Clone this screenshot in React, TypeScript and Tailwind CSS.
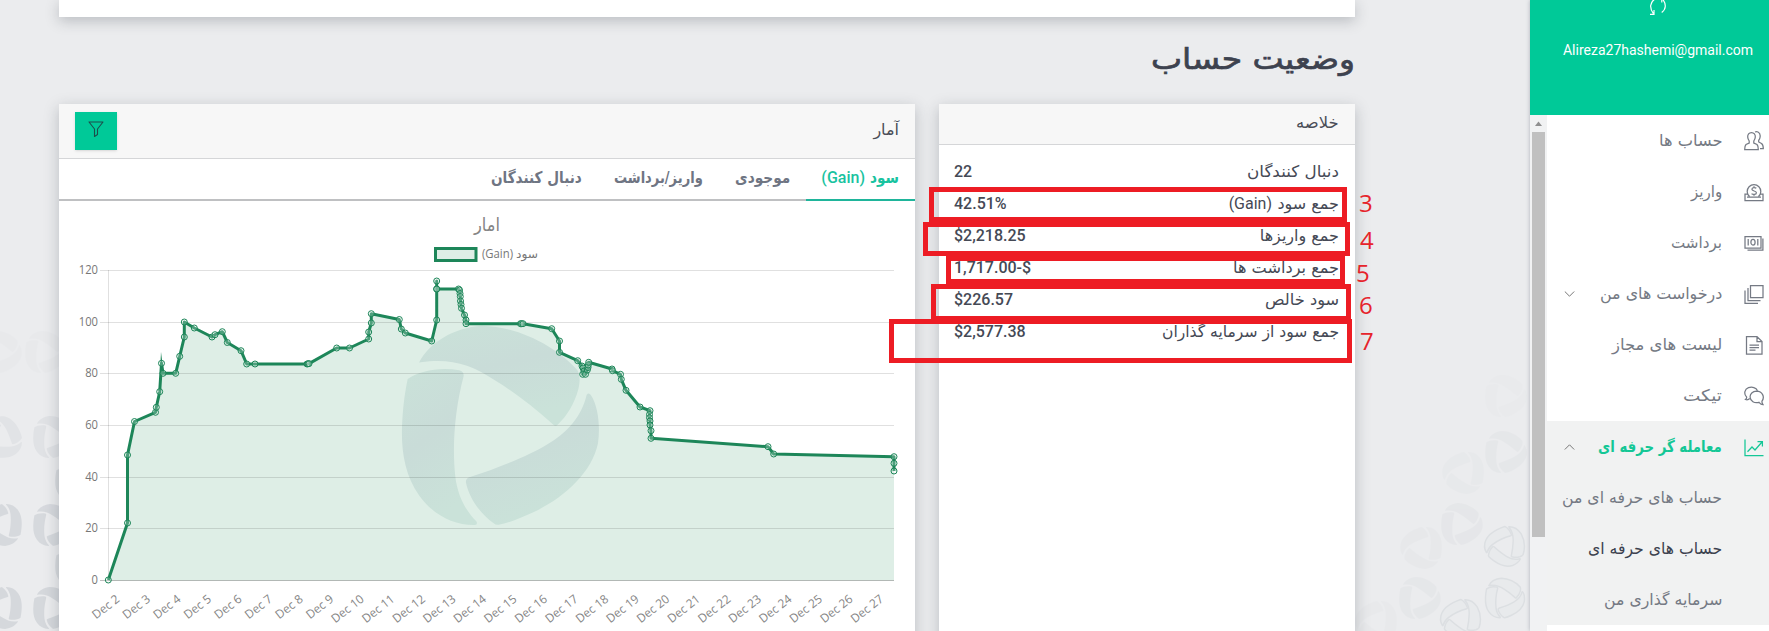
import { useLayoutEffect, useRef, useState, type ReactNode } from "react";

type FitProps = { w: number; children: ReactNode; className?: string };

/** Right-to-left label condensed or widened to a given width. */
function Fit({ w, children, className = "" }: FitProps) {
  const ref = useRef<HTMLSpanElement>(null);
  const [scale, setScale] = useState(1);
  useLayoutEffect(() => {
    if (ref.current) setScale(w / ref.current.offsetWidth);
  }, [w]);
  return (
    <span className={`flex shrink-0 justify-start whitespace-nowrap ${className}`} style={{ width: w }}>
      <span ref={ref} className="inline-block shrink-0 origin-right" style={{ transform: `scaleX(${scale})` }}>
        {children}
      </span>
    </span>
  );
}

function LogoShape() {
  return (
    <>
      <path d="M88 306C118 248 190 203 275 197C390 200 500 262 562 330C570 346 571 362 565 388C554 430 530 470 503 494Q497 500 490 494C430 440 370 395 318 363C240 311 180 295 92 307Q86 309 88 306Z" />
      <path d="M53 357C90 332 150 320 208 331Q222 335 221 348C194 450 186 560 196 650C203 710 230 755 259 784Q264 793 255 795C190 796 130 765 88 707C40 640 32 560 37 480C40 430 46 390 53 357Z" />
      <path d="M590 404Q597 396 603 406C625 440 631 500 624 550C605 640 520 715 430 757C390 776 355 789 326 794Q318 796 311 790C270 760 238 715 228 668Q226 657 238 652C330 622 420 585 470 554C530 520 575 470 590 404Z" />
    </>
  );
}

const marks = [
  { x: 1, y: 437, r: -90, o: 0.3 }, { x: 54, y: 437, r: 0, o: 0.35 },
  { x: 1, y: 525, r: 180, o: 0.65 }, { x: 54, y: 525, r: 0, o: 0.65 },
  { x: 1, y: 608, r: 180, o: 0.7 }, { x: 54, y: 608, r: 0, o: 0.7 },
  { x: 76, y: 480, r: 0, o: 0.6 }, { x: 76, y: 565, r: 0, o: 0.6 },
  { x: 1, y: 352, r: 0, o: 0.08 }, { x: 46, y: 352, r: 0, o: 0.08 },
  { x: 1506, y: 396, r: 0, o: 0.05 }, { x: 1506, y: 452, r: 0, o: 0.16 },
  { x: 1463, y: 473, r: 180, o: 0.1 }, { x: 1462, y: 524, r: 0, o: 0.18 },
  { x: 1421, y: 548, r: 180, o: 0.12 }, { x: 1420, y: 598, r: 0, o: 0.16 },
  { x: 1376, y: 622, r: 180, o: 0.08 },
];
const outlined = [
  { x: 1506, y: 547, r: 60 }, { x: 1505, y: 598, r: 0 }, { x: 1462, y: 620, r: 60 },
];

function Backdrop() {
  return (
    <svg className="absolute inset-0" width="1530" height="631" viewBox="0 0 1530 631" aria-hidden="true">
      {marks.map((m, i) => (
        <g key={i} fill="#ccd0d5" opacity={m.o} transform={`translate(${m.x} ${m.y}) rotate(${m.r}) scale(.07) translate(-332 -496)`}>
          <LogoShape />
        </g>
      ))}
      {outlined.map((m, i) => (
        <g key={i} fill="#e8eaec" stroke="#dcdfe2" strokeWidth="22" transform={`translate(${m.x} ${m.y}) rotate(${m.r}) scale(.066) translate(-332 -496)`}>
          <LogoShape />
        </g>
      ))}
    </svg>
  );
}

const points: [number, number][] = [
  [108.3, 580], [127.5, 523], [127.5, 455], [134.5, 421.5], [155.5, 412.3], [156.3, 407.3], [159.7, 391.7],
  [161.5, 363.3], [163, 373.3], [175.7, 373.3], [179.7, 356.3], [184.3, 337], [184.3, 322], [194.3, 328],
  [212, 337], [215, 334.7], [222.3, 331.7], [227.3, 342.5], [241, 350.7], [246.7, 364], [255, 364],
  [307, 364], [308, 363.8], [309, 363.6], [336.7, 348], [349.5, 348], [368.7, 339], [368.7, 332], [371.3, 323],
  [371.3, 313.7], [399.3, 319.5], [401.3, 329], [405.3, 333], [431.7, 341], [436.7, 320], [436.7, 289],
  [436.7, 281], [436.7, 289], [458.5, 289], [459.5, 290], [460, 293.5], [460.3, 296.5], [460.5, 301], [461, 304.5], [461.5, 308.3],
  [464.5, 315], [466, 320], [466, 323.7], [520.5, 323.7], [521.5, 323.7], [523, 323.7], [551.7, 328.7], [559.5, 341],
  [559.5, 352.3], [577.7, 360.7], [582, 366], [583, 368], [584, 371], [582.7, 374.3], [585.5, 374.3], [587.3, 370],
  [588, 367.5], [588.3, 365], [588.7, 362.3], [612, 369], [612.5, 370.7], [620.5, 374.3], [621.3, 379.3], [626, 390.3],
  [640, 407], [650, 410.7], [649.5, 414.5], [649.5, 417.7], [650, 421], [650, 425], [651, 430.7], [651, 438.3],
  [768, 446.7], [773.7, 454], [894, 456.7], [894, 463.3], [894, 471],
];
const linePath = "M" + points.map((p) => p.join(" ")).join("L");
const days = Array.from({ length: 26 }, (_, i) => i + 2);
const ticks = [120, 100, 80, 60, 40, 20, 0];

function Chart() {
  return (
    <svg className="block" width="856" height="430" viewBox="59 201 856 430" direction="ltr">
      <defs>
        <linearGradient id="blade" x1="0" y1="0" x2=".35" y2="1">
          <stop offset="0" stopColor="#cae2d9" />
          <stop offset=".5" stopColor="#c9dcd8" />
          <stop offset="1" stopColor="#cae2d9" />
        </linearGradient>
      </defs>
      <g fill="#777" fontFamily="'DejaVu Sans', sans-serif" direction="rtl">
        <text x="500" y="231" fontSize="18" textLength="26" lengthAdjust="spacingAndGlyphs" fill="#858585">امار</text>
        <text x="538" y="258" fontSize="12" textLength="22" lengthAdjust="spacingAndGlyphs">سود</text>
      </g>
      <text x="482" y="258" fontSize="12" fontFamily="'Open Sans', sans-serif" fill="#777" textLength="31" lengthAdjust="spacingAndGlyphs">(Gain)</text>
      <rect x="435.5" y="248.5" width="40.5" height="12" fill="#deeee6" stroke="#1d8659" strokeWidth="3" />
      <path d={`${linePath}V580.5H108.3Z`} fill="#deeee6" />
      <g fill="url(#blade)" transform="translate(390 260) scale(.33333)"><LogoShape /></g>
      <g stroke="#000" strokeOpacity=".12" shapeRendering="crispEdges">
        {ticks.map((t) => (
          <line key={t} x1="100" x2="894" y1={580.5 - Math.round(t * 2.583)} y2={580.5 - Math.round(t * 2.583)} strokeOpacity={t === 0 ? 0.25 : 0.12} />
        ))}
        <line x1="108.5" x2="108.5" y1="270" y2="580" />
      </g>
      <path d={linePath} fill="none" stroke="#1d8659" strokeWidth="3" strokeLinejoin="round" />
      <path d="M160.4 364L161 352L162.5 364Z" fill="#1d8659" />
      <g fill="#deeee6" fillOpacity=".25" stroke="#1d8659" strokeWidth="1">
        {points.map(([x, y], i) => <circle key={i} cx={x} cy={y} r="3" />)}
      </g>
      <g fill="#777" fontSize="12" fontFamily="'Open Sans', sans-serif" textAnchor="end">
        {ticks.map((t) => (
          <text key={t} x="98" y={584 - t * 2.583} textLength={String(t).length * 6.4} lengthAdjust="spacingAndGlyphs">{t}</text>
        ))}
        {days.map((d, i) => (
          <text key={d} transform={`translate(${120.5 + i * 30.55} 600.5) rotate(-38)`} fill="#858585" textLength={d < 10 ? 31 : 37.5} lengthAdjust="spacingAndGlyphs">
            {`Dec ${d}`}
          </text>
        ))}
      </g>
    </svg>
  );
}

const tabs = [
  { w: 55, pad: "mr-[16px]", text: "موجودی" },
  { w: 89, pad: "mr-[32px]", text: "واریز/برداشت" },
  { w: 91, pad: "mr-[32px]", text: "دنبال کنندگان" },
];

function StatsCard() {
  return (
    <section className="h-[560px] w-[856px] bg-white shadow-[0_4px_14px_rgba(40,48,60,0.25)]">
      <header className="flex h-[55px] items-center justify-between border-b border-[#d5d6d8] bg-[#f7f7f7] px-4">
        <Fit w={26} className="pb-0.5 text-[#4a4d57]">آمار</Fit>
        <button className="flex h-[38px] w-[42px] items-start justify-center bg-[#00c998] pt-[9px] shadow-sm">
          <svg width="16" height="17" viewBox="0 0 16 17" fill="none" stroke="#1c4f4c" strokeWidth="1.1" strokeLinejoin="round">
            <path d="M1 1H15L9.5 8V13.5L6.5 15.5V8Z" />
          </svg>
        </button>
      </header>
      <nav className="flex h-[42px] items-stretch border-b-2 border-[#bfc0c2] font-bold text-[#6f7583]">
        <div className="-mb-0.5 flex w-[109px] items-center border-b-2 border-[#1fb59b] pr-4 pb-0.5 text-[#19c3a0]">
          <Fit w={29}>سود</Fit>
          <span className="mr-[5px] font-[Roboto] font-medium" dir="ltr">(Gain)</span>
        </div>
        {tabs.map((t) => (
          <div key={t.text} className={`flex items-center pb-0.5 ${t.pad}`}><Fit w={t.w}>{t.text}</Fit></div>
        ))}
      </nav>
      <Chart />
    </section>
  );
}

const rows = [
  { w: 92, label: "دنبال کنندگان", value: "22" },
  { w: 62, label: "جمع سود", gain: true, value: "42.51%" },
  { w: 79, label: "جمع واریزها", value: "$2,218.25" },
  { w: 106, label: "جمع برداشت ها", value: "1,717.00-$" },
  { w: 74, label: "سود خالص", value: "$226.57" },
  { w: 177, label: "جمع سود از سرمایه گذاران", value: "$2,577.38" },
];

function SummaryCard() {
  return (
    <section className="h-[560px] w-[416px] bg-white shadow-[0_4px_14px_rgba(40,48,60,0.25)]">
      <header className="flex h-[41px] items-center border-b border-[#d5d6d8] bg-[#f7f7f7] px-4">
        <Fit w={43} className="pb-0.5 text-[#4a4d57]">خلاصه</Fit>
      </header>
      <div className="pt-[11px] pr-4 pl-[15px]">
        {rows.map((r) => (
          <div key={r.label} className="flex h-8 items-center justify-between text-[#454955]">
            <span className="flex items-center">
              <Fit w={r.w}>{r.label}</Fit>
              {r.gain && <span className="mr-[5px] font-[Roboto]" dir="ltr">(Gain)</span>}
            </span>
            <span className="font-[Roboto] font-medium" dir="ltr">{r.value}</span>
          </div>
        ))}
      </div>
    </section>
  );
}

const icons: Record<string, ReactNode> = {
  users: (
    <>
      <path d="M7.5 1.5C10 1.5 11.5 3.5 11.3 6C11.2 8 10.5 9 9.8 10V12L13 13.5C14 14.5 14.3 17 14.3 18.5H.7C.7 17 1 14.5 2 13.5L5.2 12V10C4.5 9 3.8 8 3.7 6C3.5 3.5 5 1.5 7.5 1.5Z" />
      <path d="M11 1C12 .6 13 .6 14 1C16 2 16.5 4 16 6.5C15.8 8 15.3 8.7 14.7 9.3V11L17.5 12.5C19 13.5 19.3 15.5 19.3 17.5H16" />
    </>
  ),
  deposit: (
    <>
      <path d="M5.5 14.5A6.8 6.8 0 1 1 14.5 14.5M3.5 12H1V18.5H19V12H16.5M3 15H17" />
      <path d="M12.3 6.3C11.5 5.5 8 5.2 7.9 7.3C7.9 9.5 12.4 8.5 12.4 10.8C12.4 13 8.5 12.8 7.6 11.6M10 4.2V5.6M10 12.4V13.8" />
    </>
  ),
  withdraw: (
    <>
      <path d="M1 3.5H17V15H1ZM18.9 5.5V17.2H3.5M4.2 6V12.5M13.8 6V12.5" />
      <ellipse cx="9" cy="9.2" rx="2.1" ry="2.9" />
    </>
  ),
  stack: <path d="M6.5 1.5H19V13.7H6.5ZM4 4V16.5H16.5M1 6.5V19.3H14" />,
  file: <path d="M2.5 1.5H13L18 6.5V19H2.5ZM13 1.5V6.5H18M5.5 10H15M5.5 12.5H15M5.5 15.2H11.5" />,
  chat: (
    <>
      <path d="M5.8 12.5C4.5 13.8 3 14 1.5 13.5C2.5 12.7 2.8 12 2.6 11C-.5 8 .6 3 4.5 1.7C8 .5 12.2 1.5 13.5 4.8" />
      <path d="M12.5 5.2C8.5 5.2 6 8 6.1 11C6.2 15 10.5 17.8 15 16.3C16.3 17.8 17.5 18.7 19 18.7C18 17.3 17.8 16.5 18 15C21 11 18.5 5.3 12.5 5.2Z" />
    </>
  ),
  trend: <path d="M1 2.5V18.5H19.5M3.5 14.8L8 10L11 13L18 5M13.5 4.7H18.4V9.5" />,
};

function Icon({ name }: { name: string }) {
  return (
    <svg width="20" height="20" viewBox="0 0 20 20" fill="none" stroke="currentColor" strokeWidth="1.25" className="shrink-0">
      {icons[name]}
    </svg>
  );
}

function Chevron({ up = false }: { up?: boolean }) {
  return (
    <svg width="11" height="6" viewBox="0 0 11 6" fill="none" stroke="#777" strokeWidth="1" className="mr-auto">
      <path d={up ? "M.8 5.5L5.5.8L10.2 5.5" : "M.8.5L5.5 5.2L10.2.5"} />
    </svg>
  );
}

const menu = [
  { icon: "users", w: 64, text: "حساب ها" },
  { icon: "deposit", w: 31, text: "واریز" },
  { icon: "withdraw", w: 51, text: "برداشت" },
  { icon: "stack", w: 122, text: "درخواست های من", arrow: true },
  { icon: "file", w: 110, text: "لیست های مجاز" },
  { icon: "chat", w: 39, text: "تیکت" },
];
const submenu = [
  { w: 160, text: "حساب های حرفه ای من", tone: "text-[#757a84]" },
  { w: 134, text: "حساب های حرفه ای", tone: "text-[#3d424f]" },
  { w: 118, text: "سرمایه گذاری من", tone: "text-[#757a84]" },
];

function Sidebar() {
  return (
    <aside className="relative z-10 flex w-[239px] shrink-0 flex-col bg-white shadow-[0_0_4px_rgba(60,70,90,0.35)]">
      <div className="flex h-[115px] shrink-0 flex-col items-center bg-[#00c998] pl-[17px] text-white" dir="ltr">
        <svg width="18" height="20" viewBox="0 0 18 20" fill="none" stroke="#fff" strokeWidth="1.2" className="-mt-[4px] shrink-0">
          <path d="M5.3 3.5C1 6.5.3 12 4.3 17.5M1 18.3H5V14M12.7 16.5C17 13.5 17.6 8 13.5 3M17 2.2H12.8V6.5" />
        </svg>
        <span className="mt-[23px] font-[Roboto] text-[14px] leading-[22px]">Alireza27hashemi@gmail.com</span>
      </div>
      <div className="flex h-[516px]">
        <nav className="flex w-[222px] flex-col text-[#757a84]">
          <ul className="flex h-[306px] flex-col">
            {menu.map((m) => (
              <li key={m.icon} className="flex h-[51px] items-center pr-[5px] pl-[17px]">
                <Icon name={m.icon} />
                <Fit w={m.w} className="mr-[22px]">{m.text}</Fit>
                {m.arrow && <Chevron />}
              </li>
            ))}
          </ul>
          <ul className="flex h-[204px] flex-col bg-[#f1f2f2]">
            <li className="flex h-[51px] items-center pr-[5px] pl-[17px] font-bold text-[#14c796]">
              <Icon name="trend" />
              <Fit w={124} className="mr-[22px]">معامله گر حرفه ای</Fit>
              <Chevron up />
            </li>
            {submenu.map((s) => (
              <li key={s.text} className={`flex h-[51px] items-center pr-[47px] ${s.tone}`}><Fit w={s.w}>{s.text}</Fit></li>
            ))}
          </ul>
        </nav>
        <div className="flex w-[17px] flex-col items-center bg-[#f1f2f3]">
          <svg width="17" height="17" viewBox="0 0 17 17"><path d="M5 11L8.5 6.5L12 11Z" fill="#8f8f8f" /></svg>
          <div className="h-[405px] w-[13px] bg-[#c0c0c0]" />
        </div>
      </div>
    </aside>
  );
}

const callouts = [
  { n: 3, box: "left-[929px] top-[187px] h-[35px] w-[418px]", num: "left-[1359px] top-[191px]" },
  { n: 4, box: "left-[923px] top-[222px] h-[34px] w-[427px]", num: "left-[1360px] top-[228px]" },
  { n: 5, box: "left-[946px] top-[256px] h-[28px] w-[399px]", num: "left-[1356px] top-[261px]" },
  { n: 6, box: "left-[931px] top-[284px] h-[37px] w-[420px]", num: "left-[1359px] top-[293px]" },
  { n: 7, box: "left-[889px] top-[319px] h-[44px] w-[463px]", num: "left-[1360px] top-[329px]" },
];

function Callouts() {
  return (
    <div className="pointer-events-none absolute inset-0" dir="ltr">
      {callouts.map((c) => (
        <div key={c.n}>
          <div className={`absolute border-[5px] border-[#ed1c24] ${c.box}`} />
          <span className={`absolute font-['Open_Sans'] text-[24px] leading-6 text-[#e6242b] ${c.num}`}>{c.n}</span>
        </div>
      ))}
    </div>
  );
}

export default function App() {
  return (
    <div dir="rtl" className="relative flex h-[631px] w-[1769px] overflow-hidden bg-[#ebecee] font-['DejaVu_Sans',sans-serif] text-[16px] leading-6">
      <Sidebar />
      <main className="relative h-full w-[1530px] shrink-0">
        <Backdrop />
        <div className="relative mr-[175px] flex h-full w-[1296px] flex-col">
          <div className="h-[17px] shrink-0 bg-white shadow-[0_4px_14px_rgba(40,48,60,0.25)]" />
          <h1 className="flex h-[87px] shrink-0 items-center pb-[3px] text-[29px] font-medium text-[#3d424f] [-webkit-text-stroke:0.7px_#3d424f]"><Fit w={204}>وضعیت حساب</Fit></h1>
          <div className="flex items-start gap-6">
            <SummaryCard />
            <StatsCard />
          </div>
        </div>
      </main>
      <Callouts />
    </div>
  );
}
